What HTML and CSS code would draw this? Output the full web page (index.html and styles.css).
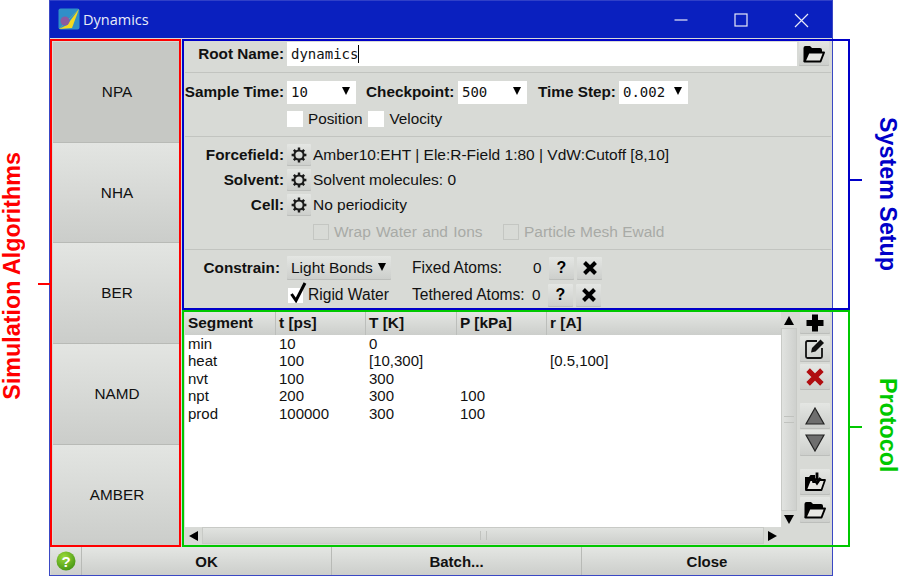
FILE: index.html
```html
<!DOCTYPE html>
<html lang="en">
<head>
<meta charset="utf-8">
<title>Dynamics</title>
<link rel="stylesheet" href="styles.css">
</head>
<body>
<svg class="defs" width="0" height="0" aria-hidden="true">
  <defs>
    <symbol id="gear" viewBox="0 0 16 16">
      <circle cx="8" cy="8" r="4.600" fill="none" stroke="#1a1a1a" stroke-width="2"/>
      <path d="M8 .6V3.400M8 12.600v2.800M.6 8H3.400M12.600 8h2.800M2.800 2.800l2 2M11.200 11.200l2 2M2.800 13.200l2-2M11.200 4.800l2-2" stroke="#1a1a1a" stroke-width="2.400" fill="none"/>
    </symbol>
    <symbol id="folder" viewBox="0 0 22 18">
      <path d="M.5 16.500V3q0-2 2-2h4.500l2 2h8q2 0 2 2v2H6L1.500 17Z" fill="#000"/>
      <path d="M1.500 16.500 5.500 7.500H21l-3.500 9Z" fill="#e8e8e4" stroke="#000" stroke-width="2" stroke-linejoin="round"/>
    </symbol>
    <symbol id="cross" viewBox="0 0 16 16">
      <path d="M2.500 2.500 13.500 13.500M13.500 2.500 2.500 13.500" stroke="currentColor" stroke-width="4" fill="none"/>
    </symbol>
  </defs>
</svg>
<main class="page">
  <section class="window">
    <header class="titlebar">
      <svg class="app-icon" width="22" height="22" viewBox="0 0 22 22">
        <rect width="21" height="21" x=".5" y=".5" rx="2" fill="#2f8fc8"/>
        <path d="M1 21 21 1l-7 19Z" fill="#f4d91e"/>
        <path d="M1 21 21 1 9 17Z" fill="#2f8fc8"/>
        <circle cx="7" cy="13" r="4.500" fill="#8a5aa0"/>
      </svg>
      <span class="title">Dynamics</span>
      <div class="window-controls">
        <svg width="46" height="37" viewBox="0 0 46 37"><path d="M16.500 19h13" stroke="#e8eaf8" stroke-width="1.200"/></svg>
        <svg width="46" height="37" viewBox="0 0 46 37"><rect x="17" y="13" width="12" height="12" fill="none" stroke="#e8eaf8" stroke-width="1.200"/></svg>
        <svg width="46" height="37" viewBox="0 0 46 37"><path d="M17 13l13 13M30 13 17 26" stroke="#e8eaf8" stroke-width="1.200"/></svg>
      </div>
    </header>

    <div class="body">
      <nav class="algorithms">
        <button class="algo active">NPA</button>
        <button class="algo">NHA</button>
        <button class="algo">BER</button>
        <button class="algo">NAMD</button>
        <button class="algo">AMBER</button>
      </nav>

      <div class="main">
        <section class="setup">
          <div class="row root-row">
            <label class="lbl">Root Name:</label>
            <div class="input mono">dynamics<span class="caret"></span></div>
            <button class="btn folder-btn"><svg width="22" height="18"><use href="#folder"/></svg></button>
          </div>
          <hr class="rule rule-a">
          <div class="row sample-row">
            <label class="lbl">Sample Time:</label>
            <div class="combo mono"><span>10</span><i class="tri"></i></div>
            <label class="lbl-inline check-lbl">Checkpoint:</label>
            <div class="combo mono"><span>500</span><i class="tri"></i></div>
            <label class="lbl-inline step-lbl">Time Step:</label>
            <div class="combo mono"><span>0.002</span><i class="tri"></i></div>
          </div>
          <div class="row checks-row">
            <span class="box"></span><span class="txt">Position</span>
            <span class="box velocity"></span><span class="txt">Velocity</span>
          </div>
          <hr class="rule rule-b">
          <div class="row ff-row">
            <label class="lbl">Forcefield:</label>
            <button class="btn gear"><svg width="16" height="16"><use href="#gear"/></svg></button>
            <span class="txt">Amber10:EHT | Ele:R-Field 1:80 | VdW:Cutoff [8,10]</span>
          </div>
          <div class="row ff-row">
            <label class="lbl">Solvent:</label>
            <button class="btn gear"><svg width="16" height="16"><use href="#gear"/></svg></button>
            <span class="txt">Solvent molecules: 0</span>
          </div>
          <div class="row ff-row">
            <label class="lbl">Cell:</label>
            <button class="btn gear"><svg width="16" height="16"><use href="#gear"/></svg></button>
            <span class="txt">No periodicity</span>
          </div>
          <div class="row disabled-row">
            <span class="box off"></span><span class="txt off-txt wrap-txt">Wrap Water and Ions</span>
            <span class="box off"></span><span class="txt off-txt">Particle Mesh Ewald</span>
          </div>
          <hr class="rule rule-c">
          <div class="row con-row">
            <label class="lbl con-lbl">Constrain:</label>
            <button class="btn bonds"><span>Light Bonds</span><i class="tri"></i></button>
            <span class="txt atoms">Fixed Atoms:</span><span class="txt zero">0</span>
            <button class="btn sq q">?</button>
            <button class="btn sq"><svg width="16" height="16"><use href="#cross"/></svg></button>
          </div>
          <div class="row con-row2">
            <span class="box rigid"><svg class="tick" width="19" height="22" viewBox="0 0 19 22"><path d="M2.500 13 7 19.500 16 2" fill="none" stroke="#000" stroke-width="3"/></svg></span>
            <span class="txt rigid-txt">Rigid Water</span>
            <span class="txt atoms tether">Tethered Atoms:</span><span class="txt zero2">0</span>
            <button class="btn sq q">?</button>
            <button class="btn sq"><svg width="16" height="16"><use href="#cross"/></svg></button>
          </div>
        </section>

        <section class="protocol">
          <div class="table-wrap">
            <div class="table-area">
              <div class="grid head">
                <span>Segment</span><span>t [ps]</span><span>T [K]</span><span>P [kPa]</span><span>r [A]</span>
              </div>
              <div class="table-body">
                <div class="grid rowline"><span>min</span><span>10</span><span>0</span><span></span><span></span></div>
                <div class="grid rowline"><span>heat</span><span>100</span><span>[10,300]</span><span></span><span>[0.5,100]</span></div>
                <div class="grid rowline"><span>nvt</span><span>100</span><span>300</span><span></span><span></span></div>
                <div class="grid rowline"><span>npt</span><span>200</span><span>300</span><span>100</span><span></span></div>
                <div class="grid rowline"><span>prod</span><span>100000</span><span>300</span><span>100</span><span></span></div>
              </div>
            </div>
            <div class="vscroll">
              <button class="sb-btn"><i class="arrow up"></i></button>
              <div class="vthumb"><i class="grip"></i></div>
              <button class="sb-btn"><i class="arrow down"></i></button>
            </div>
            <div class="hscroll">
              <button class="sb-btn h"><i class="arrow left"></i></button>
              <div class="hthumb"><i class="grip-v"></i></div>
              <button class="sb-btn h"><i class="arrow right"></i></button>
            </div>
          </div>
          <div class="tools">
            <button class="btn tool t1"><svg width="20" height="20" viewBox="0 0 20 20"><path d="M7 1.500h6V7h5.500v6H13v5.500H7V13H1.500V7H7Z" fill="#000"/></svg></button>
            <button class="btn tool t2"><svg width="22" height="22" viewBox="0 0 22 22"><path d="M13 3H3.500Q2 3 2 4.500v14Q2 20 3.500 20h13q1.500 0 1.500-1.500V10" fill="none" stroke="#111" stroke-width="1.800"/><path d="M8 10 16.500 1.500l3.500 3.500-8.500 8.500L7 14.500Z" fill="#111"/></svg></button>
            <button class="btn tool t3"><svg width="20" height="20" viewBox="0 0 16 16" class="red"><use href="#cross"/></svg></button>
            <button class="btn tool t4"><svg width="20" height="18" viewBox="0 0 20 18"><path d="M10 1 19 17H1Z" fill="#6e6e6e" stroke="#222" stroke-width="1.200"/></svg></button>
            <button class="btn tool t5"><svg width="20" height="18" viewBox="0 0 20 18"><path d="M10 17 19 1H1Z" fill="#6e6e6e" stroke="#222" stroke-width="1.200"/></svg></button>
            <button class="btn tool t6"><svg width="22" height="20" viewBox="0 0 22 20"><path d="M1 18V5h4l1.500-2H11v3h-.5L6 17Z" fill="#000"/><path d="M2 18 6 8h3v2h5V8h7l-3.500 10Z" fill="#e6e6e2" stroke="#000" stroke-width="1.800" stroke-linejoin="round"/><path d="M13 .5v7.500M9.500 6 13 11l3.500-5" fill="none" stroke="#000" stroke-width="2.800"/></svg></button>
            <button class="btn tool t7"><svg width="22" height="18"><use href="#folder"/></svg></button>
          </div>
        </section>
      </div>
    </div>

    <footer class="footer">
      <button class="foot help">
        <svg width="20" height="20" viewBox="0 0 20 20"><defs><radialGradient id="g" cx=".4" cy=".3" r=".8"><stop offset="0" stop-color="#9ddb3a"/><stop offset="1" stop-color="#3d8f10"/></radialGradient></defs><circle cx="10" cy="10" r="9.500" fill="url(#g)"/><text x="10" y="15.500" text-anchor="middle" class="help-q">?</text></svg>
      </button>
      <button class="foot act">OK</button>
      <button class="foot act">Batch...</button>
      <button class="foot act">Close</button>
    </footer>
  </section>

  <div class="note n-red"></div><div class="tick-mark t-red"></div>
  <div class="note n-blue"></div><div class="tick-mark t-blue"></div>
  <div class="note n-green"></div><div class="tick-mark t-green"></div>
  <div class="side side-red">Simulation Algorithms</div>
  <div class="side side-blue">System Setup</div>
  <div class="side side-green">Protocol</div>
</main>
</body>
</html>
```

FILE: styles.css
```css
* { box-sizing: border-box; }
html, body { margin: 0; padding: 0; background: #fff; }
body { font-family: "Liberation Sans", Arial, sans-serif; font-size: 15.300px; color: #111; overflow: hidden; }
.defs { display: block; height: 0; }
.page { position: relative; width: 900px; height: 576px; }
button { font-family: inherit; font-size: inherit; margin: 0; padding: 0; border: 0; color: inherit; }

.window {
  margin-left: 49px; width: 784px; height: 576px; background: #d8dad6;
  border-left: 1px solid #3a48c4; border-right: 1px solid #3a48c4; border-bottom: 1px solid #3a48c4;
  display: flex; flex-direction: column;
}
.titlebar {
  height: 38px; flex: none; background: #0a20bf; border-top: 1px solid #3040c8;
  display: flex; align-items: center; padding-left: 8px; color: #e8ecf8;
}
.app-icon { flex: none; margin-top: -1px; }
.title { font-family: "Open Sans", sans-serif; font-size: 14.500px; margin-left: 3px; }
.window-controls { margin-left: auto; display: flex; gap: 14px; margin-right: 8px; }

.body { flex: 1; display: flex; min-height: 0; }
.algorithms { width: 132px; flex: none; padding: 4px 3px 2.500px 3px; display: flex; flex-direction: column; }
.algo {
  flex: 1; font-size: 15.300px; color: #111; padding-left: 2px;
  background: linear-gradient(#e3e5e2, #cbcdca); border-bottom: 1px solid #b8bab6;
}
.algo:last-child { border-bottom: 0; }
.algo.active { background: #c6c8c4; }

.main { flex: 1; min-width: 0; display: flex; flex-direction: column; padding-left: 2px; }
.setup { height: 271px; flex: none; }
.row { display: flex; align-items: center; }
.lbl { width: 100px; text-align: right; font-weight: 700; margin-right: 3px; flex: none; white-space: nowrap; }
.lbl-inline { font-weight: 700; white-space: nowrap; }
.rule { border: 0; height: 1px; background: #c2c4c0; margin: 0 0 0 1px; width: 646px; }

.root-row { height: 27px; margin-top: 2px; }
.input { width: 510px; height: 24px; background: #fff; display: flex; align-items: center; padding-left: 4px; font-size: 14px; }
.mono { font-family: "DejaVu Sans Mono", monospace; }
.caret { display: inline-block; width: 1px; height: 18px; background: #000; }
.btn { background: linear-gradient(#e4e6e3, #cccecb); border-radius: 1px; display: flex; align-items: center; justify-content: center; box-shadow: inset 0 -1px 0 #bcbebb; }
.folder-btn { width: 30px; height: 25px; margin-left: 2px; }
.rule-a { margin-top: 5px; }

.sample-row { height: 24px; margin-top: 7px; }
.combo { width: 69px; height: 23px; background: #fff; display: flex; align-items: center; justify-content: space-between; padding: 0 6px 0 4px; font-size: 14px; }
.tri { width: 0; height: 0; border-left: 4px solid transparent; border-right: 4px solid transparent; border-top: 8px solid #000; display: block; margin-top: -2px; }
.check-lbl { margin-left: 10px; margin-right: 2px; width: 90px; }
.step-lbl { margin-left: 11px; margin-right: 2px; width: 79px; }

.checks-row { height: 18px; margin-top: 6px; padding-left: 103px; }
.box { width: 16px; height: 16px; background: #fff; flex: none; display: block; }
.txt { margin-left: 5px; white-space: nowrap; }
.velocity { margin-left: 6px; }
.rule-b { margin-top: 8px; }

.ff-row { height: 22px; margin-bottom: 3px; }
.rule-b + .ff-row { margin-top: 7px; }
.gear { width: 24px; height: 22px; flex: none; }
.ff-row .txt { margin-left: 2px; font-size: 15.500px; }
.disabled-row { height: 16px; margin-top: 8px; padding-left: 129px; }
.box.off { background: transparent; border: 1px solid #c4c6c2; }
.off-txt { color: #a8aaa6; font-size: 15.500px; }
.wrap-txt { width: 169px; word-spacing: 1px; }
.rule-c { margin-top: 9px; }

.con-row { height: 24px; margin-top: 6px; }
.con-lbl { width: 96px; margin-right: 7px; }
.bonds { width: 104px; height: 24px; flex: none; justify-content: space-between; padding: 0 5px 0 4px; font-size: 15.500px; }
.atoms { margin-left: 21px; width: 121px; font-size: 15.600px; }
.zero { width: 16px; margin-left: 0; }
.sq { width: 25px; height: 23px; flex: none; color: #000; margin-left: 3px; }
.q { font-weight: 700; font-size: 16px; margin-left: 0; }
.con-row2 { height: 24px; margin-top: 3px; padding-left: 104px; }
.rigid { width: 15px; height: 15px; position: relative; }
.tick { position: absolute; left: 1px; top: -7px; }
.rigid-txt { width: 81px; font-size: 15.600px; }
.tether { margin-left: 23px; width: 120px; }
.zero2 { width: 16px; margin-left: 0; }

.protocol { flex: 1; min-height: 0; display: flex; padding: 3px 0 0 1px; }
.table-wrap { width: 612px; flex: none; height: 232px; display: grid; grid-template-columns: 596px 16px; grid-template-rows: 215px 17px; }
.table-area { background: #fff; display: flex; flex-direction: column; min-height: 0; font-size: 15px; }
.grid { display: grid; grid-template-columns: 91px 90px 91px 90px 1fr; }
.head { height: 22.500px; background: linear-gradient(#e4e6e3, #cccecb); font-weight: 700; font-size: 15.400px; flex: none; align-items: center; }
.head span { padding-left: 3px; height: 100%; line-height: 22px; border-right: 1px solid #bcbebb; }
.head span:last-child { border-right: 0; }
.rowline { height: 17.500px; line-height: 17.500px; }
.rowline span { padding-left: 3px; }

.vscroll { display: flex; flex-direction: column; }
.sb-btn { height: 16px; flex: none; background: #d8dad6; display: flex; align-items: center; justify-content: center; }
.vthumb { flex: 1; background: linear-gradient(90deg, #e2e4e1, #cdcfcc); display: flex; align-items: center; justify-content: center; box-shadow: inset 0 0 0 1px #c8cac6; }
.grip { width: 10px; height: 7px; border-top: 1px solid #c0c2be; border-bottom: 1px solid #c0c2be; display: block; }
.hscroll { display: flex; height: 17px; }
.hscroll .h { width: 17px; height: 17px; }
.hthumb { flex: 1; background: linear-gradient(#e2e4e1, #cdcfcc); display: flex; align-items: center; justify-content: center; box-shadow: inset 0 0 0 1px #c8cac6; }
.grip-v { height: 9px; width: 7px; border-left: 1px solid #c0c2be; border-right: 1px solid #c0c2be; display: block; }
.arrow { display: block; width: 0; height: 0; }
.arrow.up { border-left: 5px solid transparent; border-right: 5px solid transparent; border-bottom: 9px solid #000; }
.arrow.down { border-left: 5px solid transparent; border-right: 5px solid transparent; border-top: 9px solid #000; }
.arrow.left { border-top: 5px solid transparent; border-bottom: 5px solid transparent; border-right: 9px solid #000; }
.arrow.right { border-top: 5px solid transparent; border-bottom: 5px solid transparent; border-left: 9px solid #000; }

.tools { width: 30px; flex: none; margin-left: 3px; display: flex; flex-direction: column; }
.tool { width: 30px; height: 26px; flex: none; margin-bottom: 2px; }
.t1 { height: 22px; }
.t4 { margin-top: 11px; margin-bottom: 1px; }
.t6 { margin-top: 11px; }
.red { color: #b00d10; }

.footer { height: 28px; flex: none; display: grid; grid-template-columns: 31px 250px 250px 250px; padding-left: 1px; }
.foot { background: linear-gradient(#e4e6e3, #cccecb); font-weight: 700; font-size: 15px; border-right: 1px solid #b8bab6; display: flex; align-items: center; justify-content: center; }
.foot:last-child { border-right: 0; }
.help-q { font: 700 15px "Liberation Sans", sans-serif; fill: #fff; }

.note { position: absolute; pointer-events: none; }
.n-red { left: 50px; top: 39px; width: 131px; height: 508px; border: 2px solid #f00; }
.n-blue { left: 182px; top: 39px; width: 668px; height: 271px; border: 2px solid #0000c8; }
.n-green { left: 182px; top: 310px; width: 668px; height: 237px; border: 2px solid #00c800; }
.tick-mark { position: absolute; height: 2px; }
.t-red { left: 38px; top: 283px; width: 12px; background: #f00; }
.t-blue { left: 850px; top: 179px; width: 12px; background: #0000c8; }
.t-green { left: 850px; top: 426px; width: 12px; background: #00c800; }
.side { position: absolute; font-weight: 700; font-size: 23.300px; line-height: 24px; white-space: nowrap; writing-mode: vertical-rl; }
.side-red { left: 0; top: 152px; color: #f00; transform: rotate(180deg); }
.side-blue { left: 876px; top: 117px; color: #0000c8; }
.side-green { left: 876px; top: 378px; color: #00c800; }
```
